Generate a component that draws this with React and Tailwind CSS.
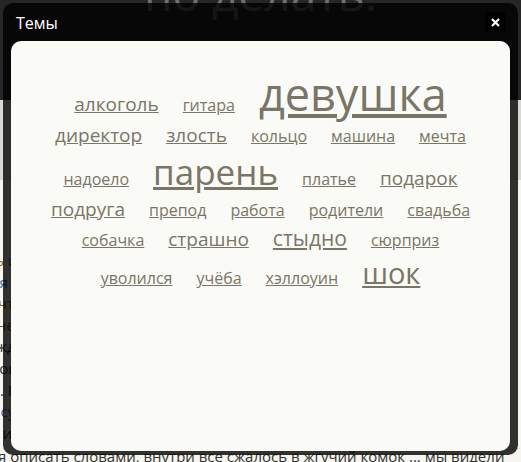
import React from "react";

const rows = [
  {
    cls: "mt-[30px]",
    words: [
      ["алкоголь", "text-[19px]"],
      ["гитара", "text-[16px]"],
      ["девушка", "text-[45px]"],
    ],
  },
  {
    cls: "mt-[10px]",
    words: [
      ["директор", "text-[19px]"],
      ["злость", "text-[19px]"],
      ["кольцо", "text-[16px]"],
      ["машина", "text-[16px]"],
      ["мечта", "text-[16px]"],
    ],
  },
  {
    cls: "mt-[9px]",
    words: [
      ["надоело", "text-[16px]"],
      ["парень", "text-[35px]"],
      ["платье", "text-[16px]"],
      ["подарок", "text-[19px]"],
    ],
  },
  {
    cls: "mt-[11px]",
    words: [
      ["подруга", "text-[19px]"],
      ["препод", "text-[16px]"],
      ["работа", "text-[16px]"],
      ["родители", "text-[16px]"],
      ["свадьба", "text-[16px]"],
    ],
  },
  {
    cls: "mt-[9px]",
    words: [
      ["собачка", "text-[16px]"],
      ["страшно", "text-[19px]"],
      ["стыдно", "text-[21px]"],
      ["сюрприз", "text-[16px]"],
    ],
  },
  {
    cls: "mt-[9px]",
    words: [
      ["уволился", "text-[16px]"],
      ["учёба", "text-[16px]"],
      ["хэллоуин", "text-[16px]"],
      ["шок", "text-[29px]"],
    ],
  },
];

const pageLines = [
  ["-ml-[12px]", "ть их не стоит, даже если очень хочется", "text-[#8a6a3a]"],
  ["-ml-[10px]", "ия и советы психологов", "text-[#3a6aa8]"],
  ["-ml-[2px]", "что делать дальше, решать только вам", "text-[#8a5a2a]"],
  ["-ml-[3px]", "не всегда это конец, иногда это начало", "text-[#8a5a2a]"],
  ["-ml-[4px]", "ждать и терпеть можно бесконечно долго", "text-[#333]"],
  ["-ml-[8px]", "зов о помощи не всегда слышен сразу", "text-[#333]"],
  ["-ml-[9px]", "о. Потом всё стало на свои места", "text-[#333]"],
  ["-ml-[9px]", "нсультация специалиста", "text-[#3a6aa8]"],
  ["-ml-[10px]", "ь и попытаться понять друг друга", "text-[#333]"],
];

export default function App() {
  return (
    <div className="relative w-[521px] h-[462px] overflow-hidden bg-[#f6f6ef] font-['Open_Sans',sans-serif]">
      {/* page behind the dialog */}
      <div className="h-[100px] bg-[#262626] flex flex-col items-center">
        <div className="-mt-[30px] text-[46px] text-[#707070] leading-none">по делать.</div>
        <div className="mt-[18px] text-[15px] text-[#c8c8c8]">Даже если вас сдали, у вас есть два выхода</div>
      </div>
      <div className="h-[80px] bg-[#d9d9d4]"></div>
      <div className="flex flex-col mt-[70px] text-[15px] leading-[21.6px]">
        {pageLines.map(([ml, t, c], i) => (
          <div key={i} className={`${ml} ${c} whitespace-nowrap`}>
            {t}
          </div>
        ))}
        <div className="-ml-[2px] mt-[2px] whitespace-nowrap text-[#333]">
          я описать словами, внутри все сжалось в жгучий комок ... мы видели
        </div>
      </div>

      {/* dialog */}
      <div className="absolute left-[3px] top-[3px] w-[515px] h-[452px] rounded-[10px] bg-black/80 flex flex-col">
        <div className="h-[38px] flex items-center justify-between pl-[13px] pr-[13px]">
          <span className="text-white text-[16px] leading-none mt-[1px]">Темы</span>
          <button className="w-[20px] h-[20px] bg-black flex items-center justify-center">
            <svg width="9" height="9" viewBox="0 0 9 9">
              <path d="M1 1 L8 8 M8 1 L1 8" stroke="#fff" strokeWidth="2.2" />
            </svg>
          </button>
        </div>
        <div className="mx-[8px] h-[410px] rounded-[10px] bg-[#fafaf6] flex flex-col">
          {rows.map((row, i) => (
            <div key={i} className={`${row.cls} flex justify-center items-baseline gap-x-[24px]`}>
              {row.words.map(([w, size]) => (
                <a key={w} href="#" className={`${size} leading-none text-[#7a7667] underline`}>
                  {w}
                </a>
              ))}
            </div>
          ))}
        </div>
      </div>
    </div>
  );
}
